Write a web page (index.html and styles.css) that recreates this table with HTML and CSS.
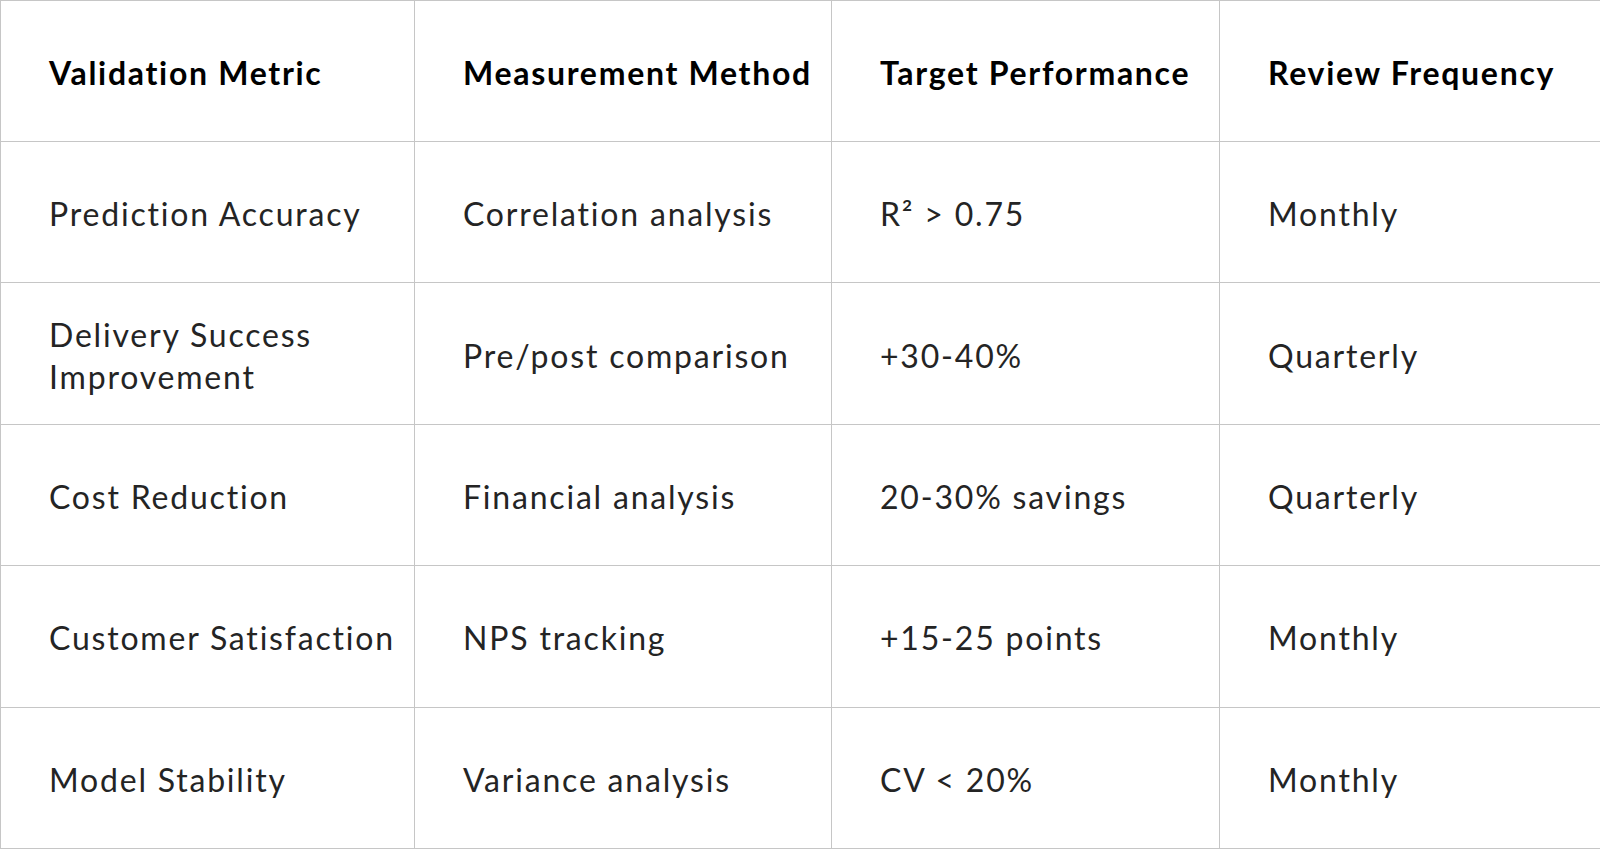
FILE: index.html
```html
<!DOCTYPE html>
<html>
<head>
<meta charset="utf-8">
<link rel="stylesheet" href="styles.css">
</head>
<body>
<table class="grid">
  <colgroup>
    <col class="c1"><col class="c2"><col class="c3"><col class="c4">
  </colgroup>
  <thead>
    <tr>
      <th>Validation Metric</th>
      <th>Measurement Method</th>
      <th>Target Performance</th>
      <th>Review Frequency</th>
    </tr>
  </thead>
  <tbody>
    <tr><td>Prediction Accuracy</td><td>Correlation analysis</td><td>R² &gt; 0.75</td><td>Monthly</td></tr>
    <tr><td>Delivery Success Improvement</td><td>Pre/post comparison</td><td>+30-40%</td><td>Quarterly</td></tr>
    <tr><td>Cost Reduction</td><td>Financial analysis</td><td>20-30% savings</td><td>Quarterly</td></tr>
    <tr><td>Customer Satisfaction</td><td>NPS tracking</td><td>+15-25 points</td><td>Monthly</td></tr>
    <tr><td>Model Stability</td><td>Variance analysis</td><td>CV &lt; 20%</td><td>Monthly</td></tr>
  </tbody>
</table>
</body>
</html>
```
FILE: styles.css
```css
html, body {
  margin: 0;
  padding: 0;
  background: #ffffff;
}
.grid {
  width: 1600px;
  height: 849px;
  border-collapse: collapse;
  table-layout: fixed;
  font-family: Lato, "Liberation Sans", sans-serif;
  font-size: 32px;
  line-height: 42px;
  color: #242424;
}
.c1 { width: 414px; }
.c2 { width: 417px; }
.c3 { width: 388px; }
.c4 { width: 381px; }
.grid th, .grid td {
  border: 1px solid #c6c6c6;
  padding: 4px 6px 0 48px;
  text-align: left;
  vertical-align: middle;
  height: 136px;
}
.grid th {
  font-weight: 700;
  color: #000000;
  letter-spacing: 1.7px;
}
.grid td {
  font-weight: 400;
  letter-spacing: 1.8px;
}
```
